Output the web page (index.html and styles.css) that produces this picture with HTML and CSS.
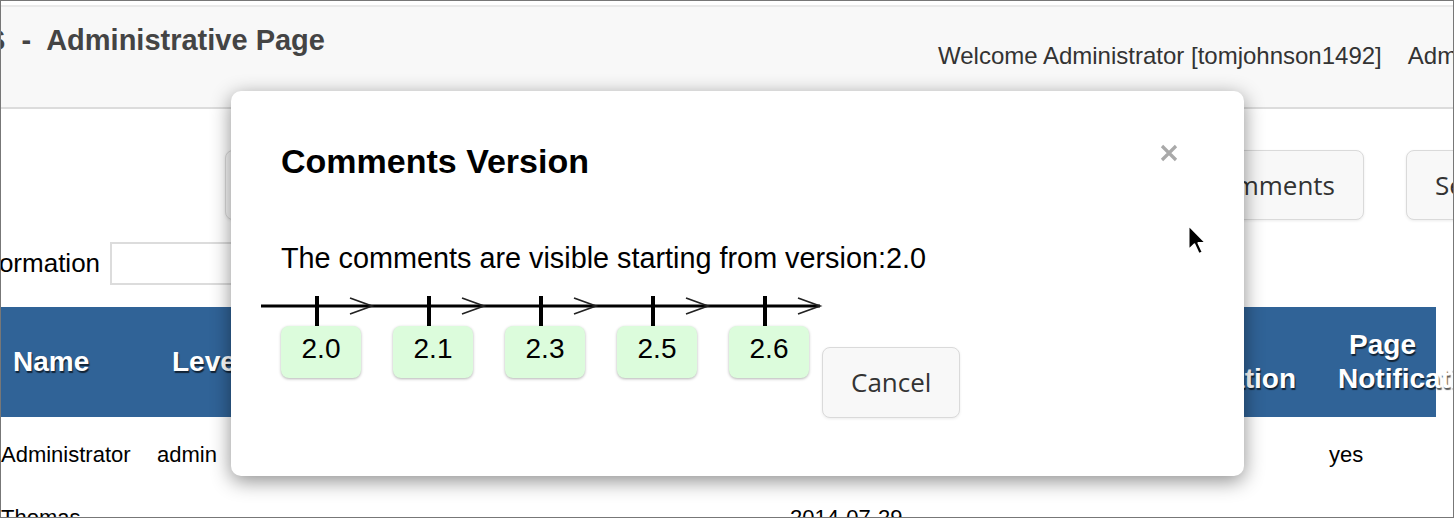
FILE: index.html
```html
<!DOCTYPE html>
<html lang="en">
<head>
<meta charset="utf-8">
<title>Administrative Page</title>
<link rel="stylesheet" href="styles.css">
</head>
<body>
<div class="frame">
  <div class="top-gap"></div>
  <header class="site-header">
    <h1 class="site-title">S&nbsp; -&nbsp; Administrative Page</h1>
    <nav class="user-nav">
      <span>Welcome Administrator [tomjohnson1492]</span>
      <span>Administration</span>
      <span>Logout</span>
    </nav>
  </header>

  <main class="content">
    <div class="btn-row">
      <button class="btn">Add New User</button>
      <button class="btn">Manage Versions</button>
      <button class="btn btn-push">Comments</button>
      <button class="btn btn-settings">Settings</button>
    </div>

    <div class="search-row">
      <label class="search-label">Information</label>
      <input class="search-input" type="text">
    </div>

    <table class="users">
      <colgroup>
        <col class="c-name"><col class="c-level"><col class="c-email"><col class="c-date"><col class="c-login"><col class="c-mail"><col class="c-page">
      </colgroup>
      <thead>
        <tr>
          <th>Name</th>
          <th>Level</th>
          <th>Email</th>
          <th>Registered</th>
          <th>Status</th>
          <th>Email Notification</th>
          <th class="th-page">Page Notification</th>
        </tr>
      </thead>
      <tbody>
        <tr>
          <td>Administrator</td>
          <td>admin</td>
          <td></td>
          <td></td>
          <td></td>
          <td></td>
          <td>yes</td>
        </tr>
        <tr>
          <td>Thomas</td>
          <td></td>
          <td></td>
          <td>2014-07-29</td>
          <td></td>
          <td></td>
          <td></td>
        </tr>
      </tbody>
    </table>
  </main>

  <div class="modal">
    <div class="modal-header">
      <h2 class="modal-title">Comments Version</h2>
      <button class="close" aria-label="Close">
        <svg width="20" height="20" viewBox="0 0 20 20"><path d="M3 3 L17 17 M17 3 L3 17" stroke="#a9a9a9" stroke-width="3.2" stroke-linecap="butt"/></svg>
      </button>
    </div>
    <p class="modal-text">The comments are visible starting from version:2.0</p>
    <svg class="timeline" width="562" height="30" viewBox="0 0 562 30">
      <line x1="0" y1="10" x2="559" y2="10" stroke="#000" stroke-width="3"/>
      <g stroke="#000" stroke-width="4">
        <line x1="56" y1="0" x2="56" y2="30"/>
        <line x1="168" y1="0" x2="168" y2="30"/>
        <line x1="280" y1="0" x2="280" y2="30"/>
        <line x1="392" y1="0" x2="392" y2="30"/>
        <line x1="504" y1="0" x2="504" y2="30"/>
      </g>
      <g stroke="#222" stroke-width="1.7" fill="none">
        <path d="M89 2 L111 10 L89 18"/>
        <path d="M201 2 L223 10 L201 18"/>
        <path d="M313 2 L335 10 L313 18"/>
        <path d="M425 2 L447 10 L425 18"/>
        <path d="M537 2 L559 10 L537 18"/>
      </g>
    </svg>
    <div class="version-row">
      <div class="version-list">
        <div class="version">2.0</div>
        <div class="version">2.1</div>
        <div class="version">2.3</div>
        <div class="version">2.5</div>
        <div class="version">2.6</div>
      </div>
      <button class="btn btn-cancel">Cancel</button>
    </div>
  </div>

  <svg class="cursor" width="21" height="32" viewBox="0 0 13 20">
    <path d="M1 1 L1 16 L4.6 12.6 L7.4 18.6 L9.6 17.6 L6.9 11.8 L11.6 11.8 Z" fill="#000" stroke="#fff" stroke-width="1" stroke-linejoin="round"/>
  </svg>
</div>
</body>
</html>
```

FILE: styles.css
```css
body {
  margin: 0;
  font-family: "Liberation Sans", Arial, sans-serif;
  background: #fff;
}

.frame {
  position: relative;
  width: 1454px;
  height: 518px;
  box-sizing: border-box;
  border: 1px solid #777;
  overflow: hidden;
  background: #fff;
}

.top-gap {
  height: 4px;
}

.site-header {
  display: grid;
  grid-template-columns: 937px auto;
  height: 100px;
  background: #f8f8f8;
  border-top: 2px solid #e9e9e9;
  border-bottom: 2px solid #dcdcdc;
}

.site-title {
  margin: 0 0 0 -15px;
  padding-top: 16px;
  font-size: 29px;
  line-height: 34px;
  font-weight: bold;
  color: #444;
  white-space: nowrap;
}

.user-nav {
  display: flex;
  gap: 26px;
  padding-top: 34px;
  font-size: 24px;
  line-height: 30px;
  color: #333;
  white-space: nowrap;
}

/* buttons */
.btn-row {
  display: flex;
  gap: 42px;
  width: 1555px;
  box-sizing: border-box;
  padding-left: 224px;
  margin-top: 41px;
}

.btn {
  flex: none;
  font-family: "Open Sans", "Liberation Sans", sans-serif;
  font-size: 26px;
  line-height: 36px;
  padding: 16px 28px;
  border: 1px solid #dadada;
  border-radius: 8px;
  background: #f8f8f8;
  color: #333;
  box-shadow: 0 1px 3px rgba(0, 0, 0, 0.08);
}

.btn-push {
  margin-left: auto;
}

.btn-settings {
  width: 150px;
  text-align: left;
}

/* search */
.search-row {
  display: flex;
  align-items: center;
  margin-top: 22px;
}

.search-label {
  margin-left: -31px;
  font-size: 26px;
  color: #000;
}

.search-input {
  margin-left: 10px;
  width: 240px;
  height: 43px;
  box-sizing: border-box;
  border: 2px solid #dcdcdc;
  background: #fff;
}

/* table */
.users {
  margin-top: 22px;
  border-collapse: collapse;
  table-layout: fixed;
  width: 1435px;
}

.c-name { width: 156px; }
.c-level { width: 243px; }
.c-email { width: 390px; }
.c-date { width: 210px; }
.c-login { width: 130px; }
.c-mail { width: 199px; }
.c-page { width: 107px; }

.users th {
  height: 110px;
  padding: 0 0 0 12px;
  background: #306397;
  color: #fff;
  font-size: 28px;
  line-height: 34px;
  font-weight: bold;
  text-align: left;
  vertical-align: middle;
  text-shadow: 1px 2px 1px rgba(0, 0, 0, 0.65);
}

.users th:nth-child(2) {
  padding-left: 15px;
}

.users th.th-page {
  padding: 0 9px;
  text-align: center;
}

.users td {
  padding: 25px 0 13px;
  font-size: 22px;
  line-height: 25px;
  color: #000;
  vertical-align: top;
  white-space: nowrap;
}

/* modal */
.modal {
  position: absolute;
  left: 230px;
  top: 90px;
  width: 1013px;
  box-sizing: border-box;
  padding: 50px 65px 58px 50px;
  background: #fff;
  border-radius: 10px;
  box-shadow: 0 5px 20px rgba(0, 0, 0, 0.45);
}

.modal-header {
  display: flex;
  justify-content: space-between;
  align-items: flex-start;
}

.modal-title {
  margin: 0;
  font-size: 34px;
  line-height: 40px;
  font-weight: bold;
  color: #000;
}

.close {
  margin-top: 2px;
  width: 20px;
  height: 20px;
  padding: 0;
  border: 0;
  background: none;
}

.close svg {
  display: block;
}

.modal-text {
  margin: 60px 0 0;
  font-size: 28.8px;
  line-height: 34px;
  color: #000;
}

.timeline {
  display: block;
  margin: 21px 0 0 -20px;
}

.version-row {
  display: flex;
  align-items: flex-start;
}

.version-list {
  display: flex;
  gap: 32px;
}

.version {
  width: 80px;
  height: 52px;
  box-sizing: border-box;
  padding-bottom: 6px;
  line-height: 46px;
  text-align: center;
  font-size: 28px;
  color: #000;
  background: #dcfcdc;
  border-radius: 8px;
  box-shadow: 0 1px 3px rgba(0, 0, 0, 0.3);
}

.btn-cancel {
  margin: 21px 0 0 13px;
  padding: 16px 28px;
  line-height: 37px;
}

.cursor {
  position: absolute;
  left: 1186px;
  top: 223px;
}
```
